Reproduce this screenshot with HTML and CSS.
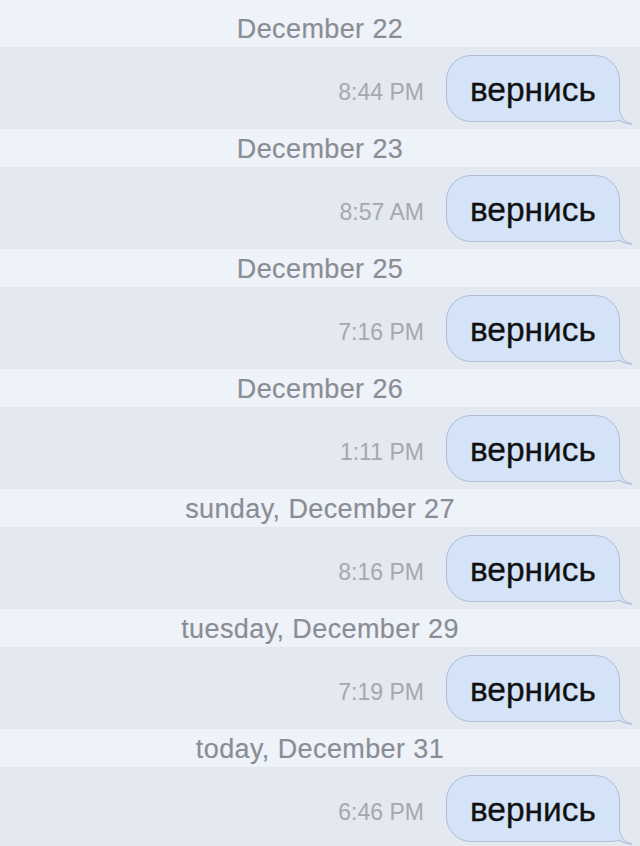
FILE: index.html
```html
<!DOCTYPE html>
<html lang="ru">
<head>
    <meta charset="UTF-8">
    <meta name="viewport" content="width=device-width, initial-scale=1.0">
    <title>Сообщения</title>
    <link rel="stylesheet" href="styles.css">
</head>
<body>
<div class="chat">
    <div class="date first">December 22</div>
    <div class="row">
        <span class="time">8:44 PM</span>
        <div class="bubble">вернись<svg class="tail" viewBox="0 0 44 34"><path d="M29.5 6 L29.5 16 C29.5 24 34 30 42 32 C37 32 33 30.5 29 28 C26 29.5 21 29.5 15 29.5 L6 29.5 L6 6 Z" fill="#d4e3f7"/><path d="M29.5 6 L29.5 16 C29.5 24 34 30 42 32 C37 32 33 30.5 29 28 C26 29.5 21 29.5 15 29.5 L6 29.5" fill="none" stroke="#adbdd4" stroke-width="1"/></svg></div>
    </div>

    <div class="date">December 23</div>
    <div class="row">
        <span class="time">8:57 AM</span>
        <div class="bubble">вернись<svg class="tail" viewBox="0 0 44 34"><path d="M29.5 6 L29.5 16 C29.5 24 34 30 42 32 C37 32 33 30.5 29 28 C26 29.5 21 29.5 15 29.5 L6 29.5 L6 6 Z" fill="#d4e3f7"/><path d="M29.5 6 L29.5 16 C29.5 24 34 30 42 32 C37 32 33 30.5 29 28 C26 29.5 21 29.5 15 29.5 L6 29.5" fill="none" stroke="#adbdd4" stroke-width="1"/></svg></div>
    </div>

    <div class="date">December 25</div>
    <div class="row">
        <span class="time">7:16 PM</span>
        <div class="bubble">вернись<svg class="tail" viewBox="0 0 44 34"><path d="M29.5 6 L29.5 16 C29.5 24 34 30 42 32 C37 32 33 30.5 29 28 C26 29.5 21 29.5 15 29.5 L6 29.5 L6 6 Z" fill="#d4e3f7"/><path d="M29.5 6 L29.5 16 C29.5 24 34 30 42 32 C37 32 33 30.5 29 28 C26 29.5 21 29.5 15 29.5 L6 29.5" fill="none" stroke="#adbdd4" stroke-width="1"/></svg></div>
    </div>

    <div class="date">December 26</div>
    <div class="row">
        <span class="time">1:11 PM</span>
        <div class="bubble">вернись<svg class="tail" viewBox="0 0 44 34"><path d="M29.5 6 L29.5 16 C29.5 24 34 30 42 32 C37 32 33 30.5 29 28 C26 29.5 21 29.5 15 29.5 L6 29.5 L6 6 Z" fill="#d4e3f7"/><path d="M29.5 6 L29.5 16 C29.5 24 34 30 42 32 C37 32 33 30.5 29 28 C26 29.5 21 29.5 15 29.5 L6 29.5" fill="none" stroke="#adbdd4" stroke-width="1"/></svg></div>
    </div>

    <div class="date">sunday, December 27</div>
    <div class="row">
        <span class="time">8:16 PM</span>
        <div class="bubble">вернись<svg class="tail" viewBox="0 0 44 34"><path d="M29.5 6 L29.5 16 C29.5 24 34 30 42 32 C37 32 33 30.5 29 28 C26 29.5 21 29.5 15 29.5 L6 29.5 L6 6 Z" fill="#d4e3f7"/><path d="M29.5 6 L29.5 16 C29.5 24 34 30 42 32 C37 32 33 30.5 29 28 C26 29.5 21 29.5 15 29.5 L6 29.5" fill="none" stroke="#adbdd4" stroke-width="1"/></svg></div>
    </div>

    <div class="date">tuesday, December 29</div>
    <div class="row">
        <span class="time">7:19 PM</span>
        <div class="bubble">вернись<svg class="tail" viewBox="0 0 44 34"><path d="M29.5 6 L29.5 16 C29.5 24 34 30 42 32 C37 32 33 30.5 29 28 C26 29.5 21 29.5 15 29.5 L6 29.5 L6 6 Z" fill="#d4e3f7"/><path d="M29.5 6 L29.5 16 C29.5 24 34 30 42 32 C37 32 33 30.5 29 28 C26 29.5 21 29.5 15 29.5 L6 29.5" fill="none" stroke="#adbdd4" stroke-width="1"/></svg></div>
    </div>

    <div class="date">today, December 31</div>
    <div class="row">
        <span class="time">6:46 PM</span>
        <div class="bubble">вернись<svg class="tail" viewBox="0 0 44 34"><path d="M29.5 6 L29.5 16 C29.5 24 34 30 42 32 C37 32 33 30.5 29 28 C26 29.5 21 29.5 15 29.5 L6 29.5 L6 6 Z" fill="#d4e3f7"/><path d="M29.5 6 L29.5 16 C29.5 24 34 30 42 32 C37 32 33 30.5 29 28 C26 29.5 21 29.5 15 29.5 L6 29.5" fill="none" stroke="#adbdd4" stroke-width="1"/></svg></div>
    </div>
</div>
</body>
</html>
```

FILE: styles.css
```css
body {
    margin: 0;
    font-family: "Liberation Sans", Arial, sans-serif;
    background-color: #e4e8f0;
}

.chat {
    width: 640px;
    height: 846px;
    overflow: hidden;
}

/* полоса с датой */
.date {
    height: 38px;
    line-height: 41px;
    background-color: #eef2f9;
    color: #8a8d94;
    font-size: 27px;
    letter-spacing: 0.4px;
    text-align: center;
    -webkit-text-stroke: 0.15px #8a8d94;
}
.date.first {
    padding-top: 9px;
}

/* полоса с сообщением */
.row {
    height: 82px;
    display: flex;
    align-items: center;
    justify-content: flex-end;
    gap: 22px;
    padding-right: 20px;
    background-color: #e4e8f0;
}

.time {
    font-size: 23px;
    color: #a4a8af;
    margin-top: 8px;
}

.bubble {
    position: relative;
    height: 67px;
    padding: 3px 23px 0;
    display: flex;
    align-items: center;
    box-sizing: border-box;
    background-color: #d4e3f7;
    border: 1px solid #adbdd4;
    border-radius: 25px;
    font-size: 33.5px;
    color: #111;
    -webkit-text-stroke: 0.3px #111;
}

.tail {
    position: absolute;
    right: -15px;
    bottom: -5px;
    width: 44px;
    height: 34px;
}
```
